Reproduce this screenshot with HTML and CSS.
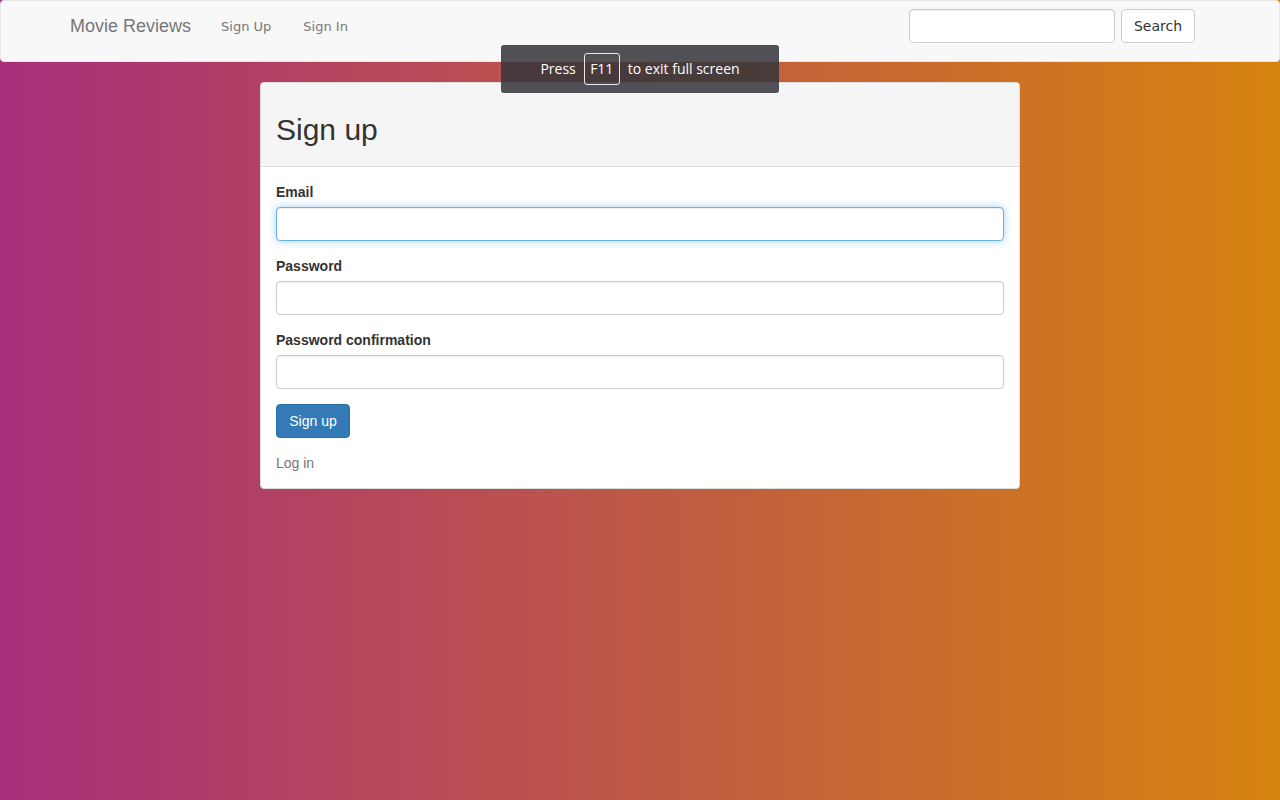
FILE: index.html
```html
<!DOCTYPE html>
<html>
<head>
<meta charset="utf-8">
<title>Movie Reviews</title>
<link rel="stylesheet" href="styles.css">
</head>
<body>
<nav class="navbar">
  <div class="nav-inner">
    <a class="brand" href="#">Movie Reviews</a>
    <ul class="nav-links">
      <li><a href="#">Sign Up</a></li>
      <li><a href="#">Sign In</a></li>
    </ul>
    <form class="search-form">
      <input class="search-input" type="text">
      <button class="search-btn" type="button">Search</button>
    </form>
  </div>
</nav>

<div class="fs-notice">
  <span>Press</span>
  <span class="kbd">F11</span>
  <span>to exit full screen</span>
</div>

<main class="page">
  <section class="panel">
    <header class="panel-heading">
      <h2 class="panel-title">Sign up</h2>
    </header>
    <div class="panel-body">
      <form class="signup-form">
        <div class="form-group">
          <label class="label">Email</label>
          <input class="form-control focused" type="email">
        </div>
        <div class="form-group">
          <label class="label">Password</label>
          <input class="form-control" type="password">
        </div>
        <div class="form-group">
          <label class="label">Password confirmation</label>
          <input class="form-control" type="password">
        </div>
        <div class="actions">
          <button class="btn-primary" type="button">Sign up</button>
        </div>
      </form>
      <a class="login-link" href="#">Log in</a>
    </div>
  </section>
</main>
</body>
</html>
```

FILE: styles.css
```css
* { box-sizing: border-box; }
html, body { height: 100%; }
body {
  margin: 0;
  font-family: "Liberation Sans", Arial, sans-serif;
  font-size: 14px;
  line-height: 20px;
  color: #333;
  background: linear-gradient(to right, #a72f7b, #d5830f);
}
a { text-decoration: none; }

.navbar {
  background: #f8f8f8;
  border: 1px solid #e7e7e7;
  border-radius: 4px;
  height: 62px;
}
.nav-inner {
  display: flex;
  align-items: center;
  height: 60px;
  padding: 0 84px 0 69px;
}
.brand {
  color: #777;
  font-size: 18px;
  line-height: 20px;
  margin-top: -11px;
}
.nav-links {
  display: flex;
  list-style: none;
  margin: -10px 0 0 30px;
  padding: 0;
  gap: 32px;
}
.nav-links a {
  font-family: "DejaVu Sans", Verdana, sans-serif;
  font-size: 13px;
  color: #777;
}
.search-form {
  margin-left: auto;
  display: flex;
  gap: 6px;
  margin-top: -10px;
}
.search-input {
  width: 206px;
  height: 34px;
  border: 1px solid #ccc;
  border-radius: 4px;
  background: #fff;
  box-shadow: inset 0 1px 1px rgba(0,0,0,.075);
}
.search-btn {
  width: 74px;
  height: 34px;
  background: #fff;
  border: 1px solid #ccc;
  border-radius: 4px;
  color: #333;
  font-family: "DejaVu Sans", Verdana, sans-serif;
  font-size: 14px;
  padding: 0;
}

.fs-notice {
  position: absolute;
  left: 501px;
  top: 45px;
  width: 278px;
  height: 48px;
  background: rgba(52, 54, 58, 0.86);
  border-radius: 3px;
  color: #fff;
  font-family: "Open Sans", "Noto Sans", sans-serif;
  font-size: 14px;
  display: flex;
  align-items: center;
  justify-content: center;
  gap: 8px;
  z-index: 10;
}
.kbd {
  display: inline-flex;
  align-items: center;
  justify-content: center;
  width: 36px;
  height: 32px;
  border: 1px solid #e8e8e8;
  border-radius: 3px;
}

.page {
  display: flex;
  justify-content: center;
  padding-top: 20px;
}
.panel {
  width: 760px;
  background: #fff;
  border: 1px solid #ddd;
  border-radius: 4px;
  overflow: hidden;
}
.panel-heading {
  background: #f5f5f5;
  border-bottom: 1px solid #ddd;
  height: 84px;
  padding: 0 15px;
  display: flex;
  align-items: center;
}
.panel-title {
  margin: 11px 0 0 0;
  font-weight: 500;
  font-size: 30px;
  line-height: 34px;
  color: #333;
}
.panel-body {
  padding: 15px;
}
.form-group {
  margin-bottom: 15px;
  display: flex;
  flex-direction: column;
}
.label {
  font-weight: bold;
  margin-bottom: 5px;
  line-height: 20px;
}
.form-control {
  height: 34px;
  width: 100%;
  border: 1px solid #ccc;
  border-radius: 4px;
  background: #fff;
  box-shadow: inset 0 1px 1px rgba(0,0,0,.075);
  padding: 6px 12px;
}
.form-control.focused {
  border-color: #66afe9;
  box-shadow: inset 0 1px 1px rgba(0,0,0,.075), 0 0 8px rgba(102,175,233,.6);
  outline: none;
}
.actions {
  margin-bottom: 15px;
}
.btn-primary {
  height: 34px;
  width: 74px;
  background: #337ab7;
  border: 1px solid #2e6da4;
  border-radius: 4px;
  color: #fff;
  font-family: "Liberation Sans", Arial, sans-serif;
  font-size: 14px;
  padding: 0;
}
.login-link {
  display: block;
  color: #777;
  font-size: 14px;
  line-height: 20px;
}
```
